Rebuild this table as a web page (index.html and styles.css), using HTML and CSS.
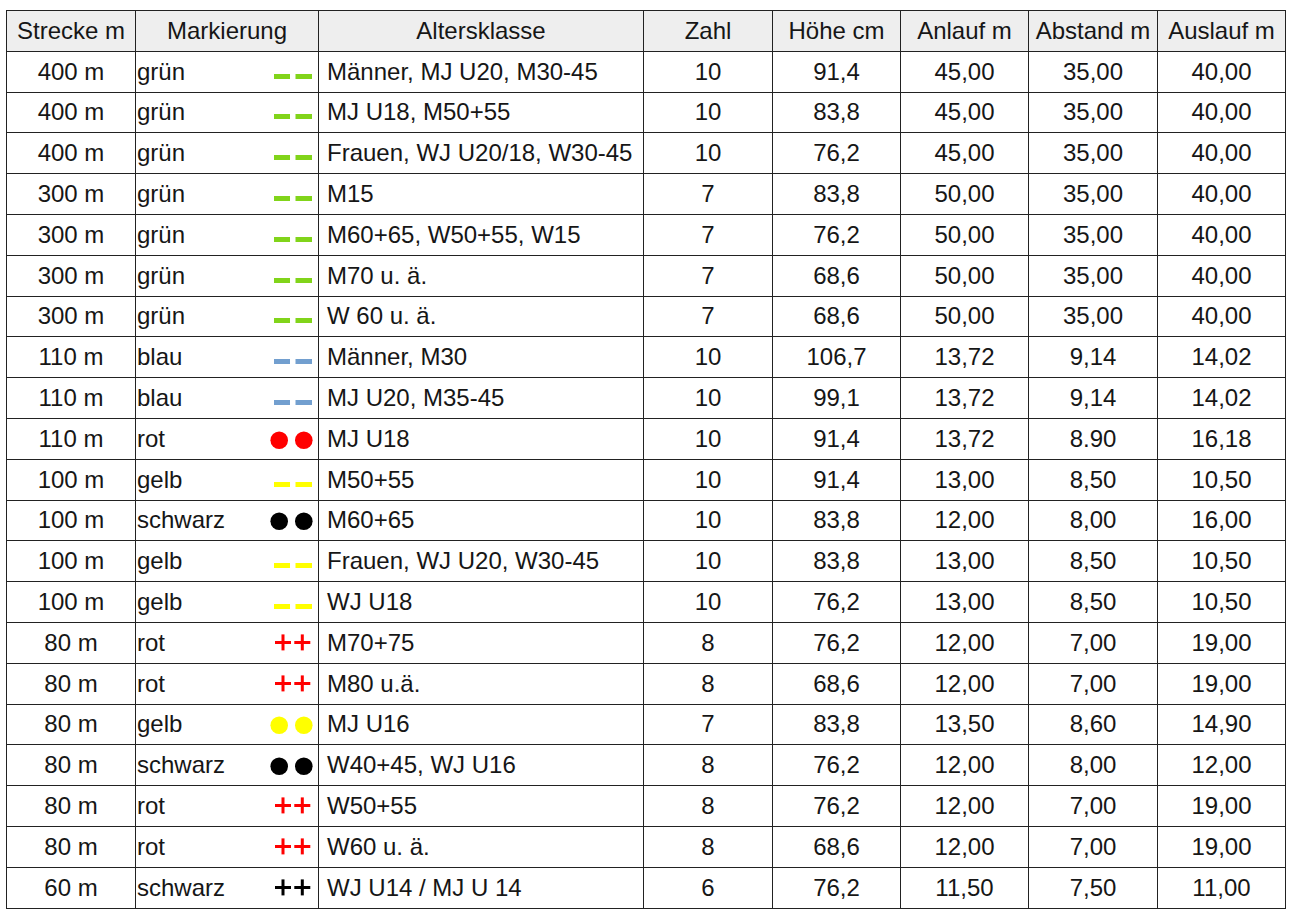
FILE: index.html
```html
<!DOCTYPE html>
<html lang="de">
<head>
<meta charset="utf-8">
<title>Hürdenabstände</title>
<link rel="stylesheet" href="styles.css">
</head>
<body>
<table class="grid">
  <colgroup>
    <col class="c-strecke"><col class="c-mark"><col class="c-alter"><col class="c-zahl">
    <col class="c-hoehe"><col class="c-anlauf"><col class="c-abstand"><col class="c-auslauf">
  </colgroup>
  <thead>
    <tr>
      <th>Strecke m</th><th>Markierung</th><th>Altersklasse</th><th>Zahl</th>
      <th>Höhe cm</th><th>Anlauf m</th><th>Abstand m</th><th>Auslauf m</th>
    </tr>
  </thead>
  <tbody id="rows"></tbody>
</table>
<script src="script.js"></script>
</body>
</html>
```

FILE: script.js
```js
const rows = [
  ["400 m","grün","dash-green","Männer, MJ U20, M30-45","10","91,4","45,00","35,00","40,00"],
  ["400 m","grün","dash-green","MJ U18, M50+55","10","83,8","45,00","35,00","40,00"],
  ["400 m","grün","dash-green","Frauen, WJ U20/18, W30-45","10","76,2","45,00","35,00","40,00"],
  ["300 m","grün","dash-green","M15","7","83,8","50,00","35,00","40,00"],
  ["300 m","grün","dash-green","M60+65, W50+55, W15","7","76,2","50,00","35,00","40,00"],
  ["300 m","grün","dash-green","M70 u. ä.","7","68,6","50,00","35,00","40,00"],
  ["300 m","grün","dash-green","W 60 u. ä.","7","68,6","50,00","35,00","40,00"],
  ["110 m","blau","dash-blue","Männer, M30","10","106,7","13,72","9,14","14,02"],
  ["110 m","blau","dash-blue","MJ U20, M35-45","10","99,1","13,72","9,14","14,02"],
  ["110 m","rot","dot-red","MJ U18","10","91,4","13,72","8.90","16,18"],
  ["100 m","gelb","dash-yellow","M50+55","10","91,4","13,00","8,50","10,50"],
  ["100 m","schwarz","dot-black","M60+65","10","83,8","12,00","8,00","16,00"],
  ["100 m","gelb","dash-yellow","Frauen, WJ U20, W30-45","10","83,8","13,00","8,50","10,50"],
  ["100 m","gelb","dash-yellow","WJ U18","10","76,2","13,00","8,50","10,50"],
  ["80 m","rot","plus-red","M70+75","8","76,2","12,00","7,00","19,00"],
  ["80 m","rot","plus-red","M80 u.ä.","8","68,6","12,00","7,00","19,00"],
  ["80 m","gelb","dot-yellow","MJ U16","7","83,8","13,50","8,60","14,90"],
  ["80 m","schwarz","dot-black","W40+45, WJ U16","8","76,2","12,00","8,00","12,00"],
  ["80 m","rot","plus-red","W50+55","8","76,2","12,00","7,00","19,00"],
  ["80 m","rot","plus-red","W60 u. ä.","8","68,6","12,00","7,00","19,00"],
  ["60 m","schwarz","plus-black","WJ U14 / MJ U 14","6","76,2","11,50","7,50","11,00"]
];

const colors = { green: "#81d41a", blue: "#729fcf", yellow: "#ffff00", red: "#ff0000", black: "#000000" };

function markSvg(kind) {
  const [shape, colorName] = kind.split("-");
  const c = colors[colorName];
  let inner = "";
  if (shape === "dash") {
    inner = `<rect x="2" y="13" width="16" height="5" fill="${c}"/><rect x="23.5" y="13" width="16.5" height="5" fill="${c}"/>`;
  } else if (shape === "dot") {
    inner = `<circle cx="7.2" cy="12.2" r="8.8" fill="${c}"/><circle cx="31.8" cy="12.2" r="8.8" fill="${c}"/>`;
  } else {
    const plus = (cx) => `<rect x="${cx - 8}" y="9" width="16" height="3" fill="${c}"/><rect x="${cx - 1.5}" y="2.4" width="3" height="16" fill="${c}"/>`;
    inner = plus(11) + plus(30.3);
  }
  return `<svg class="mark" width="44" height="24" viewBox="-2 -1 44 24" aria-hidden="true">${inner}</svg>`;
}

const tbody = document.getElementById("rows");
tbody.innerHTML = rows.map(r => `
  <tr>
    <td class="center">${r[0]}</td>
    <td class="markcell"><div class="markwrap"><span>${r[1]}</span>${markSvg(r[2])}</div></td>
    <td class="left">${r[3]}</td>
    <td class="center">${r[4]}</td>
    <td class="center">${r[5]}</td>
    <td class="center">${r[6]}</td>
    <td class="center">${r[7]}</td>
    <td class="center">${r[8]}</td>
  </tr>`).join("");
```

FILE: styles.css
```css
html, body {
  margin: 0;
  padding: 0;
  background: #ffffff;
}

body {
  padding: 10px 0 0 6px;
  font-family: "Liberation Sans", Arial, sans-serif;
  font-size: 24px;
  color: #161616;
}

.grid {
  border-collapse: collapse;
  table-layout: fixed;
  width: 1279px;
}

.c-strecke { width: 129px; }
.c-mark { width: 183px; }
.c-alter { width: 325px; }
.c-zahl { width: 129px; }
.c-hoehe { width: 128px; }
.c-anlauf { width: 128px; }
.c-abstand { width: 129px; }
.c-auslauf { width: 128px; }

.grid th,
.grid td {
  border: 1px solid #222222;
  height: 39.8px;
  padding: 0;
  white-space: nowrap;
  overflow: hidden;
  line-height: 1;
}

.grid th {
  background: #eeeeee;
  font-weight: normal;
  text-align: center;
}

.center { text-align: center; }

.left {
  text-align: left;
  padding-left: 8px !important;
}

.markcell {
  padding: 0 4px 0 1px !important;
}

.markwrap {
  display: flex;
  align-items: center;
  justify-content: space-between;
}

.mark {
  display: block;
  flex: none;
}
```
